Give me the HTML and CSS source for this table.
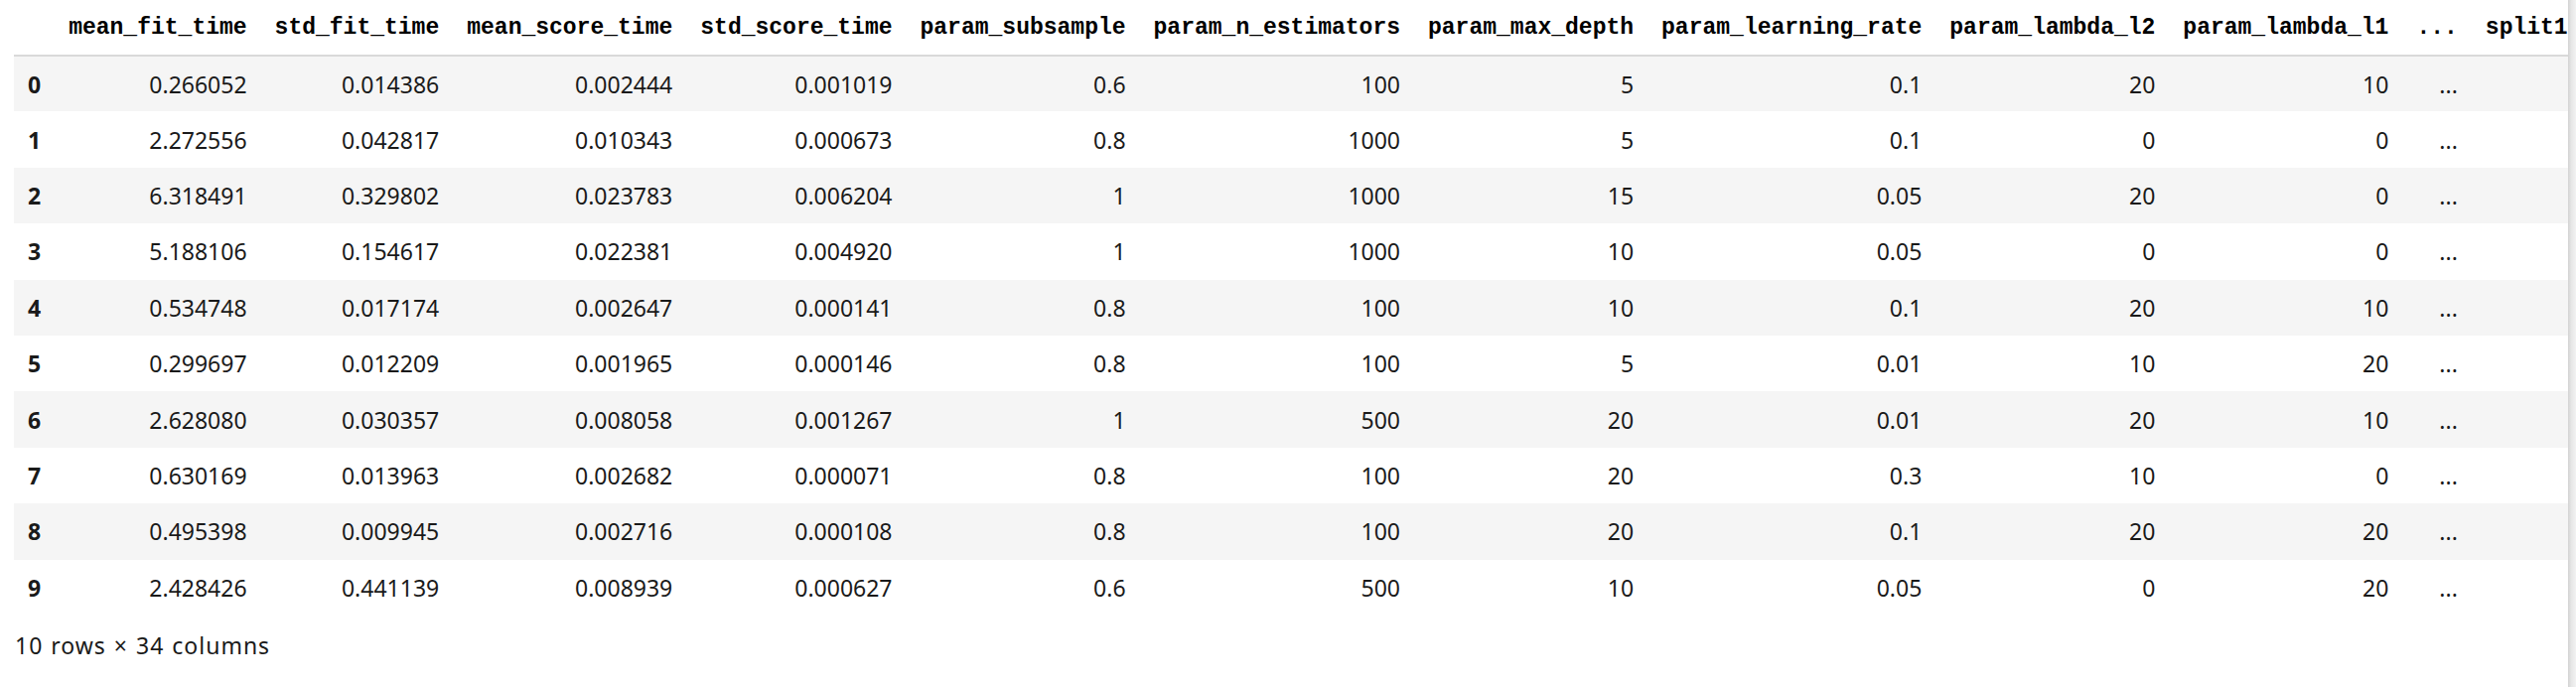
FILE: index.html
```html
<!DOCTYPE html>
<html>
<head>
<meta charset="utf-8">
<link rel="stylesheet" href="styles.css">
</head>
<body>
<div class="output">
  <div class="main">
    <table class="dataframe">
      <thead>
        <tr>
          <th class="idx"></th>
          <th>mean_fit_time</th>
          <th>std_fit_time</th>
          <th>mean_score_time</th>
          <th>std_score_time</th>
          <th>param_subsample</th>
          <th>param_n_estimators</th>
          <th>param_max_depth</th>
          <th>param_learning_rate</th>
          <th>param_lambda_l2</th>
          <th>param_lambda_l1</th>
          <th>...</th>
          <th>split1</th>
        </tr>
      </thead>
      <tbody>
        <tr><th>0</th><td>0.266052</td><td>0.014386</td><td>0.002444</td><td>0.001019</td><td>0.6</td><td>100</td><td>5</td><td>0.1</td><td>20</td><td>10</td><td>...</td><td></td></tr>
        <tr><th>1</th><td>2.272556</td><td>0.042817</td><td>0.010343</td><td>0.000673</td><td>0.8</td><td>1000</td><td>5</td><td>0.1</td><td>0</td><td>0</td><td>...</td><td></td></tr>
        <tr><th>2</th><td>6.318491</td><td>0.329802</td><td>0.023783</td><td>0.006204</td><td>1</td><td>1000</td><td>15</td><td>0.05</td><td>20</td><td>0</td><td>...</td><td></td></tr>
        <tr><th>3</th><td>5.188106</td><td>0.154617</td><td>0.022381</td><td>0.004920</td><td>1</td><td>1000</td><td>10</td><td>0.05</td><td>0</td><td>0</td><td>...</td><td></td></tr>
        <tr><th>4</th><td>0.534748</td><td>0.017174</td><td>0.002647</td><td>0.000141</td><td>0.8</td><td>100</td><td>10</td><td>0.1</td><td>20</td><td>10</td><td>...</td><td></td></tr>
        <tr><th>5</th><td>0.299697</td><td>0.012209</td><td>0.001965</td><td>0.000146</td><td>0.8</td><td>100</td><td>5</td><td>0.01</td><td>10</td><td>20</td><td>...</td><td></td></tr>
        <tr><th>6</th><td>2.628080</td><td>0.030357</td><td>0.008058</td><td>0.001267</td><td>1</td><td>500</td><td>20</td><td>0.01</td><td>20</td><td>10</td><td>...</td><td></td></tr>
        <tr><th>7</th><td>0.630169</td><td>0.013963</td><td>0.002682</td><td>0.000071</td><td>0.8</td><td>100</td><td>20</td><td>0.3</td><td>10</td><td>0</td><td>...</td><td></td></tr>
        <tr><th>8</th><td>0.495398</td><td>0.009945</td><td>0.002716</td><td>0.000108</td><td>0.8</td><td>100</td><td>20</td><td>0.1</td><td>20</td><td>20</td><td>...</td><td></td></tr>
        <tr><th>9</th><td>2.428426</td><td>0.441139</td><td>0.008939</td><td>0.000627</td><td>0.6</td><td>500</td><td>10</td><td>0.05</td><td>0</td><td>20</td><td>...</td><td></td></tr>
      </tbody>
    </table>
    <p class="shape">10 rows × 34 columns</p>
  </div>
  <div class="edge"></div>
</div>
</body>
</html>
```

FILE: styles.css
```css
html, body {
  margin: 0;
  padding: 0;
  background: #ffffff;
}

body {
  font-family: "Noto Sans", "Liberation Sans", sans-serif;
  color: #111111;
}

.output {
  display: flex;
  height: 692px;
}

.main {
  flex: 1;
  min-width: 0;
  overflow: hidden;
  padding-left: 14px;
}

.edge {
  width: 8px;
  background: linear-gradient(to right, #d2d2d2, #e6e6e6 40%, #f2f2f2);
}

.dataframe {
  border-collapse: collapse;
  border-spacing: 0;
  font-size: 23px;
}

.dataframe th,
.dataframe td {
  padding: 0 14px;
  white-space: nowrap;
  text-align: right;
  vertical-align: middle;
}

.dataframe thead th {
  height: 55px;
  font-family: "Liberation Mono", "DejaVu Sans Mono", monospace;
  font-weight: bold;
  font-size: 23px;
  color: #000000;
  border-bottom: 2px solid #d9d9d9;
}

.dataframe tbody th {
  text-align: left;
  font-weight: bold;
  color: #1a1a1a;
}

.dataframe tbody tr {
  height: 56.4px;
}

.dataframe tbody td {
  color: #1a1a1a;
}

.dataframe tbody tr:nth-child(odd) {
  background: #f5f5f5;
}

.shape {
  margin: 14px 0 0 1px;
  font-size: 23px;
  letter-spacing: 1px;
  word-spacing: 1px;
  color: #1a1a1a;
}
```
